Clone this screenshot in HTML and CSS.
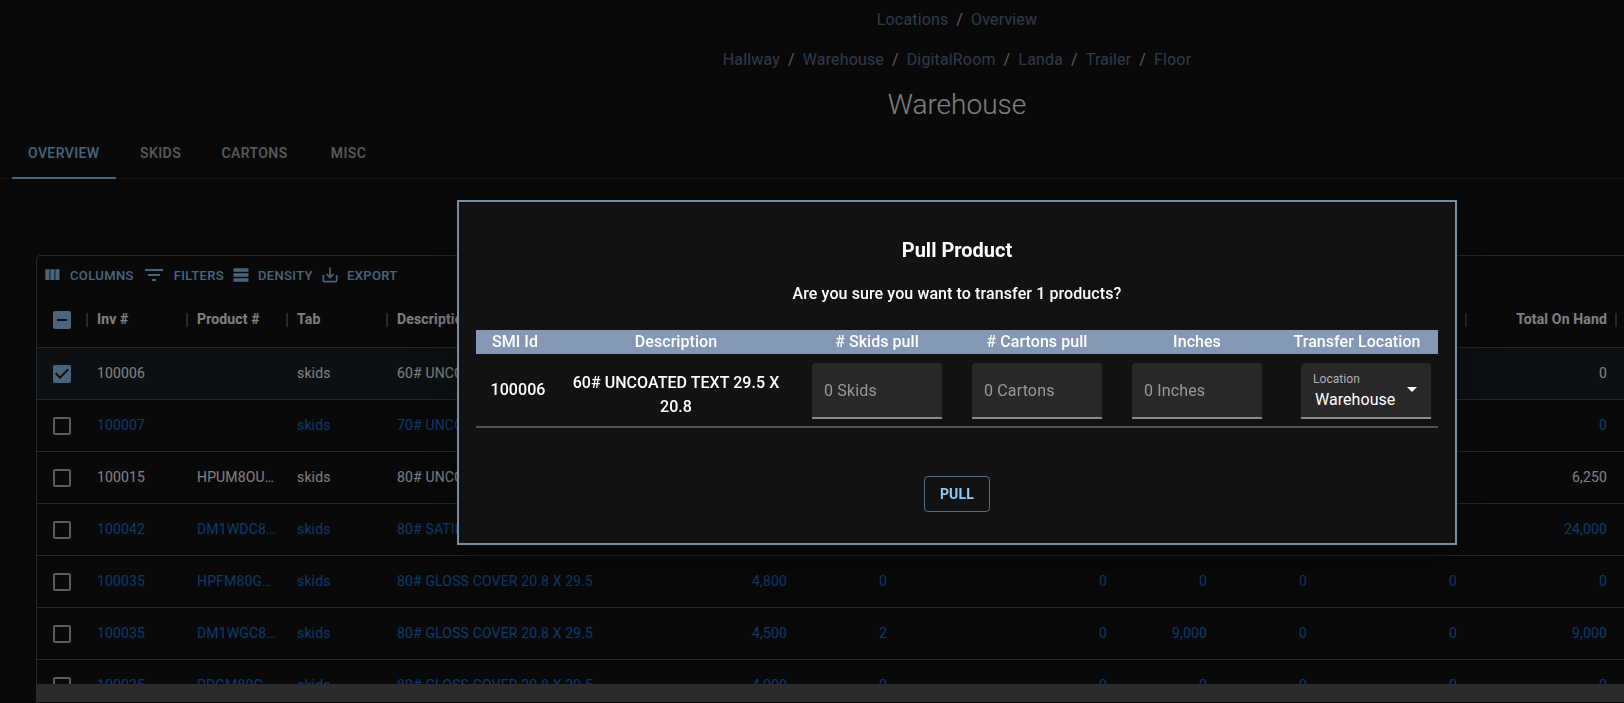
FILE: index.html
```html
<!DOCTYPE html>
<html>
<head>
	<meta charset="utf-8">
	<title>Warehouse</title>
	<link rel="stylesheet" href="styles.css">
</head>
<body>
	<!-- shared icons -->
	<svg class="defs">
		<symbol id="box-blank" viewBox="0 0 24 24"><path d="M19 5v14H5V5h14m0-2H5c-1.1 0-2 .9-2 2v14c0 1.1.9 2 2 2h14c1.1 0 2-.9 2-2V5c0-1.1-.9-2-2-2z"/></symbol>
		<symbol id="box-checked" viewBox="0 0 24 24"><path d="M19 3H5c-1.11 0-2 .9-2 2v14c0 1.1.89 2 2 2h14c1.11 0 2-.9 2-2V5c0-1.1-.89-2-2-2zm-9 14l-5-5 1.41-1.41L10 14.17l7.59-7.59L19 8l-9 9z"/></symbol>
		<symbol id="box-some" viewBox="0 0 24 24"><path d="M19 3H5c-1.1 0-2 .9-2 2v14c0 1.1.9 2 2 2h14c1.1 0 2-.9 2-2V5c0-1.1-.9-2-2-2zm-2 10H7v-2h10v2z"/></symbol>
	</svg>

	<div class="page">
		<!-- breadcrumbs and title -->
		<div class="crumbs">
			<a>Locations</a><span>/</span><a>Overview</a>
		</div>
		<div class="crumbs">
			<a>Hallway</a><span>/</span><a>Warehouse</a><span>/</span><a>DigitalRoom</a><span>/</span><a>Landa</a><span>/</span><a>Trailer</a><span>/</span><a>Floor</a>
		</div>
		<h1 class="title">Warehouse</h1>

		<!-- tabs -->
		<div class="tabs">
			<div class="tab active">Overview</div>
			<div class="tab">Skids</div>
			<div class="tab">Cartons</div>
			<div class="tab">Misc</div>
		</div>

		<!-- data grid -->
		<div class="grid">
			<div class="toolbar">
				<div class="tool">
					<svg class="icon" viewBox="0 0 24 24"><path d="M10 18h5V5h-5v13zm-6 0h5V5H4v13zM16 5v13h5V5h-5z"/></svg>Columns
				</div>
				<div class="tool">
					<svg class="icon wide" viewBox="0 0 24 24"><path d="M10 18h4v-2h-4v2zM3 6v2h18V6H3zm3 7h12v-2H6v2z"/></svg>Filters
				</div>
				<div class="tool">
					<svg class="icon tight" viewBox="0 0 24 24"><path d="M21 8H3V4h18v4zm0 2H3v4h18v-4zm0 6H3v4h18v-4z"/></svg>Density
				</div>
				<div class="tool">
					<svg class="icon tight" viewBox="0 0 24 24"><path d="M19 12v7H5v-7H3v7c0 1.1.9 2 2 2h14c1.1 0 2-.9 2-2v-7h-2zm-6 .67l2.59-2.58L17 11.5l-5 5-5-5 1.41-1.41L11 12.67V3h2z"/></svg>Export
				</div>
			</div>

			<div class="row head">
				<div class="cell check"><svg class="box on"><use href="#box-some"/></svg></div>
				<div class="cell">Inv #</div>
				<div class="cell">Product #</div>
				<div class="cell">Tab</div>
				<div class="cell">Description</div>
				<div class="cell"></div>
				<div class="cell"></div>
				<div class="cell"></div>
				<div class="cell"></div>
				<div class="cell"></div>
				<div class="cell"></div>
				<div class="cell num">Total On Hand</div>
			</div>

			<div class="rows">
				<div class="row selected">
					<div class="cell check"><svg class="box on"><use href="#box-checked"/></svg></div>
					<div class="cell">100006</div>
					<div class="cell"></div>
					<div class="cell">skids</div>
					<div class="cell">60# UNCOATED TEXT 29.5 X 20.8</div>
					<div class="cell num"></div>
					<div class="cell num"></div>
					<div class="cell num"></div>
					<div class="cell num"></div>
					<div class="cell num"></div>
					<div class="cell num"></div>
					<div class="cell num">0</div>
				</div>
				<div class="row link">
					<div class="cell check"><svg class="box"><use href="#box-blank"/></svg></div>
					<div class="cell">100007</div>
					<div class="cell"></div>
					<div class="cell">skids</div>
					<div class="cell">70# UNCOATED TEXT 29.5 X 20.8</div>
					<div class="cell num"></div>
					<div class="cell num"></div>
					<div class="cell num"></div>
					<div class="cell num"></div>
					<div class="cell num"></div>
					<div class="cell num"></div>
					<div class="cell num">0</div>
				</div>
				<div class="row">
					<div class="cell check"><svg class="box"><use href="#box-blank"/></svg></div>
					<div class="cell">100015</div>
					<div class="cell">HPUM8OU…</div>
					<div class="cell">skids</div>
					<div class="cell">80# UNCOATED TEXT 20.8 X 29.5</div>
					<div class="cell num"></div>
					<div class="cell num"></div>
					<div class="cell num"></div>
					<div class="cell num"></div>
					<div class="cell num"></div>
					<div class="cell num"></div>
					<div class="cell num">6,250</div>
				</div>
				<div class="row link">
					<div class="cell check"><svg class="box"><use href="#box-blank"/></svg></div>
					<div class="cell">100042</div>
					<div class="cell">DM1WDC8…</div>
					<div class="cell">skids</div>
					<div class="cell">80# SATIN COVER 20.8 X 29.5</div>
					<div class="cell num"></div>
					<div class="cell num"></div>
					<div class="cell num"></div>
					<div class="cell num"></div>
					<div class="cell num"></div>
					<div class="cell num"></div>
					<div class="cell num">24,000</div>
				</div>
				<div class="row link">
					<div class="cell check"><svg class="box"><use href="#box-blank"/></svg></div>
					<div class="cell">100035</div>
					<div class="cell">HPFM80G…</div>
					<div class="cell">skids</div>
					<div class="cell">80# GLOSS COVER 20.8 X 29.5</div>
					<div class="cell num">4,800</div>
					<div class="cell num">0</div>
					<div class="cell num">0</div>
					<div class="cell num">0</div>
					<div class="cell num">0</div>
					<div class="cell num">0</div>
					<div class="cell num">0</div>
				</div>
				<div class="row link">
					<div class="cell check"><svg class="box"><use href="#box-blank"/></svg></div>
					<div class="cell">100035</div>
					<div class="cell">DM1WGC8…</div>
					<div class="cell">skids</div>
					<div class="cell">80# GLOSS COVER 20.8 X 29.5</div>
					<div class="cell num">4,500</div>
					<div class="cell num">2</div>
					<div class="cell num">0</div>
					<div class="cell num">9,000</div>
					<div class="cell num">0</div>
					<div class="cell num">0</div>
					<div class="cell num">9,000</div>
				</div>
				<div class="row link">
					<div class="cell check"><svg class="box"><use href="#box-blank"/></svg></div>
					<div class="cell">100035</div>
					<div class="cell">PDGM80G…</div>
					<div class="cell">skids</div>
					<div class="cell">80# GLOSS COVER 20.8 X 29.5</div>
					<div class="cell num">4,000</div>
					<div class="cell num">0</div>
					<div class="cell num">0</div>
					<div class="cell num">0</div>
					<div class="cell num">0</div>
					<div class="cell num">0</div>
					<div class="cell num">0</div>
				</div>
			</div>

			<div class="scrollbar"></div>
		</div>
	</div>

	<!-- pull product dialog -->
	<div class="backdrop"></div>
	<div class="modal">
		<h2 class="modal-title">Pull Product</h2>
		<p class="modal-text">Are you sure you want to transfer 1 products?</p>

		<table class="pull-table">
			<thead>
				<tr>
					<th class="col-id">SMI Id</th>
					<th class="col-desc">Description</th>
					<th class="col-a"># Skids pull</th>
					<th class="col-b"># Cartons pull</th>
					<th class="col-a">Inches</th>
					<th class="col-b">Transfer Location</th>
				</tr>
			</thead>
			<tbody>
				<tr>
					<td class="id-cell">100006</td>
					<td class="desc-cell">60# UNCOATED TEXT 29.5 X 20.8</td>
					<td class="input-cell"><input class="field" placeholder="0 Skids"></td>
					<td class="input-cell"><input class="field" placeholder="0 Cartons"></td>
					<td class="input-cell"><input class="field" placeholder="0 Inches"></td>
					<td class="select-cell">
						<div class="select">
							<label>Location</label>
							<div class="select-value">Warehouse</div>
							<svg class="caret" viewBox="0 0 24 24"><path d="M7 10l5 5 5-5z"/></svg>
						</div>
					</td>
				</tr>
			</tbody>
		</table>

		<div class="modal-actions">
			<button class="pull-btn">Pull</button>
		</div>
	</div>
</body>
</html>
```

FILE: styles.css
```css
* {
	box-sizing: border-box;
}

body {
	margin: 0;
	height: 703px;
	overflow: hidden;
	background-color: #121212;
	color: #fff;
	font-family: Roboto, "Liberation Sans", sans-serif;
}

.defs {
	display: none;
}

/* page is wider than the window, the grid runs off to the right */
.page {
	width: 1914px;
}

/* breadcrumbs */
.crumbs {
	display: flex;
	justify-content: center;
	height: 24px;
	line-height: 24px;
	margin-bottom: 16px;
	font-size: 16px;
	letter-spacing: 0.15px;
	color: rgba(255, 255, 255, 0.7);
}

.crumbs:first-child {
	margin-top: 8px;
}

.crumbs a {
	color: #5c7694;
}

.crumbs span {
	margin: 0 8px;
}

.title {
	margin: -1px 0 0;
	height: 36px;
	line-height: 36px;
	text-align: center;
	font-size: 28px;
	font-weight: 300;
}

/* tabs */
.tabs {
	display: flex;
	margin-top: 7px;
	padding-left: 12px;
	border-bottom: 1px solid rgba(255, 255, 255, 0.12);
}

.tab {
	min-width: 90px;
	height: 49px;
	margin-bottom: -1px;
	padding: 13px 16px 0;
	text-align: center;
	font-size: 14px;
	line-height: 20px;
	font-weight: 500;
	letter-spacing: 0.4px;
	text-transform: uppercase;
	color: rgba(255, 255, 255, 0.7);
}

.tab.active {
	color: #90caf9;
	border-bottom: 2px solid #90caf9;
}

/* data grid, its bottom edge is below the window */
.grid {
	display: flex;
	flex-direction: column;
	height: 470px;
	margin: 76px 36px 0;
	border: 1px solid #515151;
	border-radius: 4px;
}

.toolbar {
	display: flex;
	align-items: center;
	height: 36px;
	padding: 2px 0 0 5px;
	flex: none;
}

.tool {
	display: flex;
	align-items: center;
	margin-right: 7px;
	font-size: 13px;
	font-weight: 500;
	letter-spacing: 0.37px;
	text-transform: uppercase;
	color: #90caf9;
}

.tool:first-child {
	margin-right: 8px;
}

.icon {
	width: 20px;
	height: 20px;
	margin-right: 8px;
	fill: #90caf9;
}

.icon.wide {
	width: 24px;
	height: 24px;
}

.icon.tight {
	margin-right: 7px;
}

.row {
	display: grid;
	grid-template-columns: 50px 100px 100px 100px 309px 100px 100px 220px 100px 100px 150px 150px;
	align-items: center;
	height: 52px;
	border-bottom: 1px solid #515151;
	font-size: 14px;
	letter-spacing: 0.15px;
	flex: none;
}

.row.head {
	height: 56px;
	font-weight: 700;
}

.row.selected {
	background-color: rgba(144, 202, 249, 0.08);
}

.row.link {
	color: #1976d2;
}

.rows {
	height: 336px;
	flex: none;
	overflow: hidden;
}

.cell {
	padding: 0 10px 2px;
	white-space: nowrap;
	overflow: hidden;
}

.cell.num {
	padding-right: 9px;
	text-align: right;
}

.cell.check {
	display: flex;
	justify-content: center;
	padding: 0;
}

/* column separators in the header */
.head .cell {
	position: relative;
	height: 14px;
	padding-bottom: 0;
	line-height: 12px;
	overflow: visible;
}

.head .cell::after {
	content: "";
	position: absolute;
	top: 0;
	right: -1px;
	width: 2px;
	height: 14px;
	background-color: #515151;
}

.box {
	display: block;
	width: 24px;
	height: 24px;
	fill: rgba(255, 255, 255, 0.7);
}

.head .cell.check {
	height: 24px;
}

.head .cell.check::after {
	top: 5px;
}

.box.on {
	fill: #90caf9;
}

.scrollbar {
	height: 18px;
	flex: none;
	background-color: #575757;
}

/* dialog */
.backdrop {
	position: fixed;
	top: 0;
	left: 0;
	right: 0;
	bottom: 0;
	background-color: rgba(0, 0, 0, 0.5);
}

.modal {
	position: absolute;
	top: 200px;
	left: 457px;
	width: 1000px;
	height: 345px;
	padding: 32px 17px 0;
	background-color: #121212;
	border: 2px solid #7b8ba5;
	box-shadow: 0 11px 15px -7px rgba(0, 0, 0, 0.2), 0 24px 38px 3px rgba(0, 0, 0, 0.14), 0 9px 46px 8px rgba(0, 0, 0, 0.12);
}

.modal-title {
	margin: 0;
	line-height: 32px;
	text-align: center;
	font-size: 20px;
	font-weight: 700;
}

.modal-text {
	margin: 16px 0 24px;
	line-height: 24px;
	text-align: center;
	font-size: 16px;
	font-weight: 500;
	letter-spacing: 0.1px;
}

.pull-table {
	width: 962px;
	table-layout: fixed;
	border-collapse: collapse;
	font-size: 16px;
	font-weight: 500;
	letter-spacing: 0.05px;
	text-align: center;
}

.pull-table th {
	height: 24px;
	padding: 0;
	background-color: #8497b5;
	font-weight: 500;
	line-height: 24px;
}

.col-id {
	width: 78px;
}

.col-desc {
	width: 244px;
}

.col-a {
	width: 158px;
}

.col-b {
	width: 162px;
}

.pull-table td {
	height: 73px;
	padding: 2px 0 0;
	line-height: 24px;
	border-bottom: 2px solid #515151;
}

.pull-table td.id-cell {
	padding: 0 0 0 6px;
}

.pull-table td.desc-cell {
	padding: 10px 16px 0;
}

.pull-table td.select-cell {
	padding: 2px 7px 0 0;
}

.field {
	display: block;
	width: 130px;
	height: 56px;
	margin: 0 auto;
	padding: 0 12px;
	border: 0;
	border-bottom: 2px solid #8c8c8c;
	border-radius: 4px 4px 0 0;
	background-color: #282828;
	color: #fff;
	font-family: inherit;
	font-size: 16px;
	letter-spacing: 0.15px;
}

.field::placeholder {
	color: #999;
	opacity: 1;
}

/* location dropdown */
.select {
	position: relative;
	width: 130px;
	height: 56px;
	margin-left: auto;
	padding: 7px 0 0 12px;
	border-bottom: 2px solid #8c8c8c;
	border-radius: 4px 4px 0 0;
	background-color: #282828;
	text-align: left;
	font-weight: 400;
}

.select label {
	display: block;
	font-size: 12px;
	line-height: 18px;
	color: #b0b0b0;
}

.select-value {
	margin-left: 2px;
	font-size: 16px;
	line-height: 24px;
}

.caret {
	position: absolute;
	top: 14px;
	right: 7px;
	width: 24px;
	height: 24px;
	fill: #fff;
}

.modal-actions {
	display: flex;
	justify-content: center;
	margin-top: 48px;
}

.pull-btn {
	width: 66px;
	height: 36px;
	padding: 0;
	border: 1px solid rgba(144, 202, 249, 0.5);
	border-radius: 4px;
	background: none;
	color: #90caf9;
	font-family: inherit;
	font-size: 14px;
	font-weight: 700;
	letter-spacing: 0.2px;
	text-transform: uppercase;
}
```
